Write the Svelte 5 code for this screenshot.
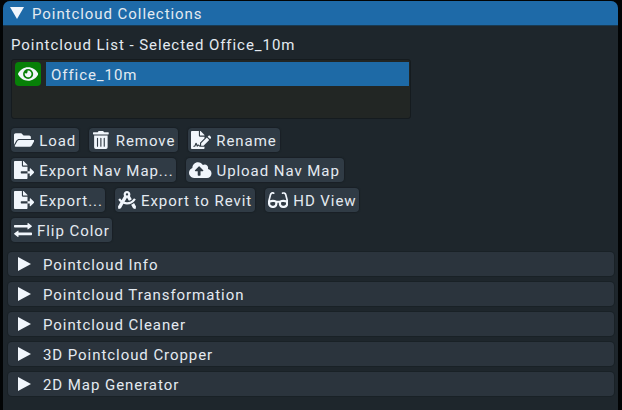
<script>
  const icons = {
    eye: { w: 576, d: 'M572.52 241.4C518.29 135.59 410.93 64 288 64S57.68 135.64 3.48 241.41a32.35 32.35 0 0 0 0 29.19C57.71 376.41 165.07 448 288 448s230.32-71.64 284.52-177.41a32.35 32.35 0 0 0 0-29.19zM288 400a144 144 0 1 1 144-144 143.93 143.93 0 0 1-144 144zm0-240a95.31 95.31 0 0 0-25.31 3.79 47.85 47.85 0 0 1-66.9 66.9A95.78 95.78 0 1 0 288 160z' },
    folder: { w: 576, d: 'M572.694 292.093L500.27 416.248A63.997 63.997 0 0 1 444.989 448H45.025c-18.523 0-30.064-20.093-20.731-36.093l72.424-124.155A64 64 0 0 1 152 256h399.964c18.523 0 30.064 20.093 20.73 36.093zM152 224h328v-48c0-26.51-21.49-48-48-48H272l-64-64H48C21.49 64 0 85.49 0 112v278.046l69.077-118.418C86.214 242.25 117.989 224 152 224z' },
    trash: { w: 448, d: 'M32 464a48 48 0 0 0 48 48h288a48 48 0 0 0 48-48V128H32zm272-256a16 16 0 0 1 32 0v224a16 16 0 0 1-32 0zm-96 0a16 16 0 0 1 32 0v224a16 16 0 0 1-32 0zm-96 0a16 16 0 0 1 32 0v224a16 16 0 0 1-32 0zM432 32H312l-9.4-18.7A24 24 0 0 0 281.1 0H166.8a23.72 23.72 0 0 0-21.4 13.3L136 32H16A16 16 0 0 0 0 48v32a16 16 0 0 0 16 16h416a16 16 0 0 0 16-16V48a16 16 0 0 0-16-16z' },
    sign: { w: 576, d: 'M218.17 424.14c-2.95-5.92-8.09-6.52-10.17-6.52s-7.22.59-10.02 6.19l-7.67 15.34c-6.37 12.78-25.03 11.37-29.48-2.09L144 386.59l-10.61 31.88c-5.89 17.66-22.38 29.53-41 29.53H80c-8.84 0-16-7.16-16-16s7.16-16 16-16h12.39c4.83 0 9.11-3.08 10.64-7.66l18.19-54.64c3.3-9.81 12.44-16.41 22.78-16.41s19.48 6.59 22.77 16.41l13.88 41.64c19.75-16.19 54.06-9.7 66 14.16 1.89 3.78 5.49 5.95 9.36 6.26v-82.12l128-127.09V160H248c-13.2 0-24-10.8-24-24V0H24C10.7 0 0 10.7 0 24v464c0 13.3 10.7 24 24 24h336c13.3 0 24-10.7 24-24v-40l-128-.11c-16.12-.31-30.58-9.28-37.83-23.75zM384 121.9c0-6.3-2.5-12.4-7-16.9L279.1 7c-4.5-4.5-10.6-7-17-7H256v128h128v-6.1zm-96 225.06V416h68.99l161.68-162.78-67.88-67.88L288 346.96zm280.54-179.63l-31.87-31.87c-9.94-9.94-26.07-9.94-36.01 0l-27.25 27.25 67.88 67.88 27.25-27.25c9.95-9.94 9.95-26.07 0-36.01z' },
    fileExport: { w: 576, d: 'M384 121.9c0-6.3-2.5-12.4-7-16.9L279.1 7c-4.5-4.5-10.6-7-17-7H256v128h128zM571 308l-95.7-96.4c-10.1-10.1-27.4-3-27.4 11.3V288h-64v64h64v65.2c0 14.3 17.3 21.4 27.4 11.3L571 332c6.6-6.6 6.6-17.4 0-24zm-379 28v-32c0-8.8 7.2-16 16-16h176V160H248c-13.2 0-24-10.8-24-24V0H24C10.7 0 0 10.7 0 24v464c0 13.3 10.7 24 24 24h336c13.3 0 24-10.7 24-24V352H208c-8.8 0-16-7.2-16-16z' },
    cloud: { w: 640, d: 'M537.6 226.6c4.1-10.7 6.4-22.4 6.4-34.6 0-53-43-96-96-96-19.7 0-38.1 6-53.3 16.2C367 64.2 315.3 32 256 32c-88.4 0-160 71.6-160 160 0 2.7.1 5.4.2 8.1C40.2 219.8 0 273.2 0 336c0 79.5 64.5 144 144 144h368c70.7 0 128-57.3 128-128 0-61.9-44-113.6-102.4-125.4zM393.4 288H328v112c0 8.8-7.2 16-16 16h-48c-8.8 0-16-7.2-16-16V288h-65.4c-14.3 0-21.4-17.2-11.3-27.3l105.4-105.4c6.2-6.2 16.4-6.2 22.6 0l105.4 105.4c10.1 10.1 2.9 27.3-11.3 27.3z' },
    compass: { w: 512, d: 'M457.01 344.42c-25.05 20.33-52.63 37.18-82.54 49.05l54.38 94.19 53.95 23.04c9.81 4.19 20.89-2.21 22.17-12.8l7.02-58.25-54.98-95.23zm42.49-94.56c4.86-7.67 1.89-17.99-6.05-22.39l-28.07-15.57c-7.48-4.15-16.61-1.46-21.26 5.72C403.01 281.15 332.25 320 256 320c-23.93 0-47.23-4.25-69.41-11.53l67.36-116.68c.7.02 1.34.21 2.04.21s1.35-.19 2.04-.21l51.09 88.5c31.23-8.96 59.56-25.75 82.61-48.92l-51.79-89.71C347.39 128.03 352 112.63 352 96c0-53.02-42.98-96-96-96s-96 42.98-96 96c0 16.63 4.61 32.03 12.05 45.66l-68.3 118.31c-12.55-11.61-23.96-24.59-33.68-39-4.79-7.1-13.97-9.62-21.38-5.33l-27.75 16.07c-7.85 4.54-10.63 14.9-5.64 22.47 15.57 23.64 34.69 44.21 55.98 62.02L0 439.66l7.02 58.25c1.28 10.59 12.36 16.99 22.17 12.8l53.95-23.04 70.8-122.63C186.13 377.28 220.62 384 256 384c99.05 0 190.88-51.01 243.5-134.14zM256 64c17.67 0 32 14.33 32 32s-14.33 32-32 32-32-14.33-32-32 14.33-32 32-32z' },
    glasses: { w: 576, d: 'M574.1 280.37L528.75 98.66c-5.91-23.7-21.59-44.05-43-55.81-21.44-11.73-46.97-14.11-70.19-6.33l-15.25 5.08c-8.39 2.79-12.92 11.86-10.12 20.24l5.06 15.18c2.79 8.38 11.85 12.91 20.23 10.12l13.18-4.39c10.87-3.62 23-3.57 33.16 1.73 10.29 5.37 17.57 14.56 20.37 25.82l38.46 153.82c-22.19-6.81-49.79-12.46-81.2-12.46-34.77 0-73.98 7.02-114.85 26.74h-73.18c-40.87-19.74-80.08-26.75-114.86-26.75-31.42 0-59.02 5.65-81.21 12.46l38.46-153.83c2.79-11.25 10.09-20.45 20.38-25.81 10.16-5.3 22.28-5.35 33.15-1.73l13.17 4.39c8.38 2.79 17.44-1.74 20.23-10.12l5.06-15.18c2.8-8.38-1.73-17.45-10.12-20.24l-15.25-5.08c-23.22-7.78-48.75-5.41-70.19 6.33-21.41 11.77-37.09 32.11-43 55.8L1.9 280.37A64.218 64.218 0 0 0 0 295.86v70.25C0 429.01 51.58 480 115.2 480h37.12c60.28 0 110.37-45.94 114.88-105.37l2.93-38.63h35.75l2.93 38.63C313.31 434.06 363.4 480 423.68 480h37.12c63.62 0 115.2-50.99 115.2-113.88v-70.25c0-5.23-.64-10.43-1.9-15.5zM203.38 369.79c-1.97 25.91-24.4 46.21-51.06 46.21H115.2C86.97 416 64 393.62 64 366.11v-37.54c18.12-6.49 43.42-12.92 72.58-12.92 23.86 0 47.26 4.33 69.93 12.92l-3.13 41.22zM512 366.12c0 27.51-22.97 49.88-51.2 49.88h-37.12c-26.67 0-49.1-20.3-51.06-46.21l-3.13-41.22c22.67-8.59 46.08-12.92 69.95-12.92 29.12 0 54.43 6.44 72.55 12.93v37.54z' },
    swap: { w: 512, d: 'M20 112H384V72Q384 46 404 60L502 132Q518 147 502 162L404 234Q384 248 384 222V184H20Q0 184 0 164V132Q0 112 20 112ZM492 330H128V290Q128 264 108 278L10 350Q-6 365 10 380L108 452Q128 466 128 440V402H492Q512 402 512 382V350Q512 330 492 330Z' }
  };

  const rows = [
    [
      { icon: 'folder', label: 'Load', width: 68 },
      { icon: 'trash', label: 'Remove', width: 89 },
      { icon: 'sign', label: 'Rename', width: 92 }
    ],
    [
      { icon: 'fileExport', label: 'Export Nav Map...', width: 165 },
      { icon: 'cloud', label: 'Upload Nav Map', width: 158 }
    ],
    [
      { icon: 'fileExport', label: 'Export...', width: 94 },
      { icon: 'compass', label: 'Export to Revit', width: 140 },
      { icon: 'glasses', label: 'HD View', width: 94 }
    ],
    [{ icon: 'swap', label: 'Flip Color', width: 101 }]
  ];

  const sections = [
    'Pointcloud Info',
    'Pointcloud Transformation',
    'Pointcloud Cleaner',
    '3D Pointcloud Cropper',
    '2D Map Generator'
  ];
</script>

{#snippet glyph(name)}
  <svg class="icon {name}" viewBox="0 0 {icons[name].w} 512" style="width: {(icons[name].w * 18) / 512}px">
    <path d={icons[name].d} />
  </svg>
{/snippet}

<div class="backdrop">
  <main class="panel">
    <header class="title">
      <svg class="down" viewBox="0 0 14 12"><path d="M0 0H14L7 12Z" /></svg>
      <span>Pointcloud Collections</span>
    </header>

    <div class="content">
      <div class="caption">Pointcloud List - Selected Office_10m</div>
      <div class="list">
        <button class="visible" aria-label="Visibility">{@render glyph('eye')}</button>
        <div class="selected">Office_10m</div>
      </div>

      <div class="actions">
        {#each rows as row}
          <div class="row">
            {#each row as action}
              <button class="action" style="width: {action.width}px">
                {@render glyph(action.icon)}
                <span>{action.label}</span>
              </button>
            {/each}
          </div>
        {/each}
      </div>
    </div>

    <div class="sections">
      {#each sections as name}
        <div class="section">
          <svg class="right" viewBox="0 0 13 14"><path d="M0 0L13 7L0 14Z" /></svg>
          <span>{name}</span>
        </div>
      {/each}
    </div>
  </main>
</div>

<style>
  :global(body) {
    background: #020405;
  }
  .backdrop {
    box-sizing: border-box;
    height: 410px;
    padding: 1px 4px 0 3px;
    overflow: hidden;
    background: #020405;
    color: #e4eaf1;
    font: 15px/24px Roboto, sans-serif;
    letter-spacing: 0.94px;
    white-space: nowrap;
  }
  .panel {
    height: 409px;
    border-radius: 7px 7px 0 0;
    background: #1e262c;
    overflow: hidden;
  }
  svg {
    display: block;
    flex: none;
    fill: #f1f6fc;
  }
  span {
    padding-top: 2px;
  }
  .icon {
    height: 18px;
  }
  .trash {
    margin: 0 2px 0 1px;
  }
  .title {
    display: flex;
    align-items: center;
    gap: 8px;
    height: 24px;
    padding-left: 7px;
    background: #1e6aa8;
    border-bottom: 1px solid #193a52;
  }
  .down {
    width: 14px;
    height: 12px;
  }
  .content {
    padding: 7px 8px 0;
  }
  .caption {
    height: 26px;
  }
  .list {
    box-sizing: border-box;
    display: flex;
    gap: 5px;
    width: 400px;
    height: 60px;
    padding: 2px 1px 0 3px;
    border: 1px solid #151b1f;
    border-radius: 3px;
    background: #222624;
  }
  button {
    box-sizing: border-box;
    display: flex;
    align-items: center;
    height: 24px;
    border: 0;
    border-radius: 4px;
    font: inherit;
    letter-spacing: inherit;
    color: inherit;
  }
  .visible {
    justify-content: center;
    width: 26px;
    padding: 0;
    background: #078007;
  }
  .selected {
    flex: 1;
    height: 24px;
    padding-left: 5px;
    background: #1e6aa6;
    line-height: 26px;
  }
  .actions {
    display: flex;
    flex-direction: column;
    gap: 6px;
    margin-top: 9px;
  }
  .row {
    display: flex;
    gap: 10px;
  }
  .action {
    gap: 5px;
    padding: 0 0 0 3px;
    background: #303b45;
    box-shadow: 0 0 1px 1px #192026;
  }
  .sections {
    display: flex;
    flex-direction: column;
    gap: 6px;
    padding: 10px 4px 0 5px;
  }
  .section {
    display: flex;
    align-items: center;
    gap: 12px;
    height: 24px;
    padding-left: 10px;
    border-radius: 4px;
    background: #2b343d;
    box-shadow: 0 0 0 1px #192126;
  }
  .right {
    width: 13px;
    height: 14px;
  }
</style>
